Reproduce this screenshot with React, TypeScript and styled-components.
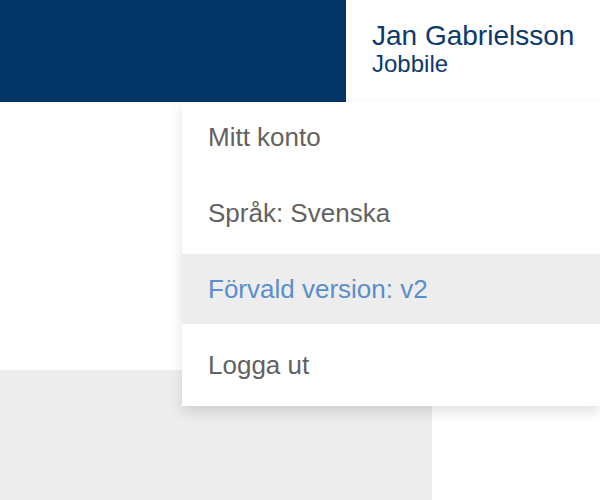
import React from "react";
import styled, { createGlobalStyle } from "styled-components";

const Global = createGlobalStyle`
  html, body { margin: 0; padding: 0; background: #fff; }
  body { font-family: "Liberation Sans", Arial, Helvetica, sans-serif; overflow: hidden; }
  * { box-sizing: border-box; }
`;

const Page = styled.div`
  position: relative;
  width: 600px;
  height: 500px;
  overflow: hidden;
  display: flex;
  flex-direction: column;
`;

const Header = styled.header`
  display: flex;
  height: 102px;
  flex-shrink: 0;
`;

const Brand = styled.div`
  width: 346px;
  background: #023466;
`;

const User = styled.div`
  flex: 1;
  padding: 20px 0 0 26px;
  display: flex;
  flex-direction: column;
  color: #0b3a6e;
`;

const UserName = styled.div`
  font-size: 28px;
  line-height: 32px;
  white-space: nowrap;
`;

const Company = styled.div`
  font-size: 24px;
  line-height: 24px;
`;

const Main = styled.main`
  flex: 1;
  padding-top: 268px;
`;

const Panel = styled.div`
  width: 432px;
  height: 140px;
  background: #ededed;
`;

const Menu = styled.ul`
  position: absolute;
  top: 102px;
  left: 182px;
  right: 0;
  margin: 0;
  padding: 0 0 6px;
  list-style: none;
  background: #fff;
  display: flex;
  flex-direction: column;
  gap: 6px;
  box-shadow: 0 6px 12px rgba(0, 0, 0, 0.12);
`;

const Item = styled.li<{ $active?: boolean }>`
  height: 70px;
  display: flex;
  align-items: center;
  padding-left: 26px;
  font-size: 26px;
  color: ${(p) => (p.$active ? "#5a8fcb" : "#626262")};
  background: ${(p) => (p.$active ? "#ededed" : "transparent")};
`;

const items = [
  { label: "Mitt konto" },
  { label: "Språk: Svenska" },
  { label: "Förvald version: v2", active: true },
  { label: "Logga ut" },
];

export default function App() {
  return (
    <>
      <Global />
      <Page>
        <Header>
          <Brand />
          <User>
            <UserName>Jan Gabrielsson</UserName>
            <Company>Jobbile</Company>
          </User>
        </Header>
        <Main>
          <Panel />
        </Main>
        <Menu>
          {items.map((it) => (
            <Item key={it.label} $active={it.active}>
              {it.label}
            </Item>
          ))}
        </Menu>
      </Page>
    </>
  );
}
